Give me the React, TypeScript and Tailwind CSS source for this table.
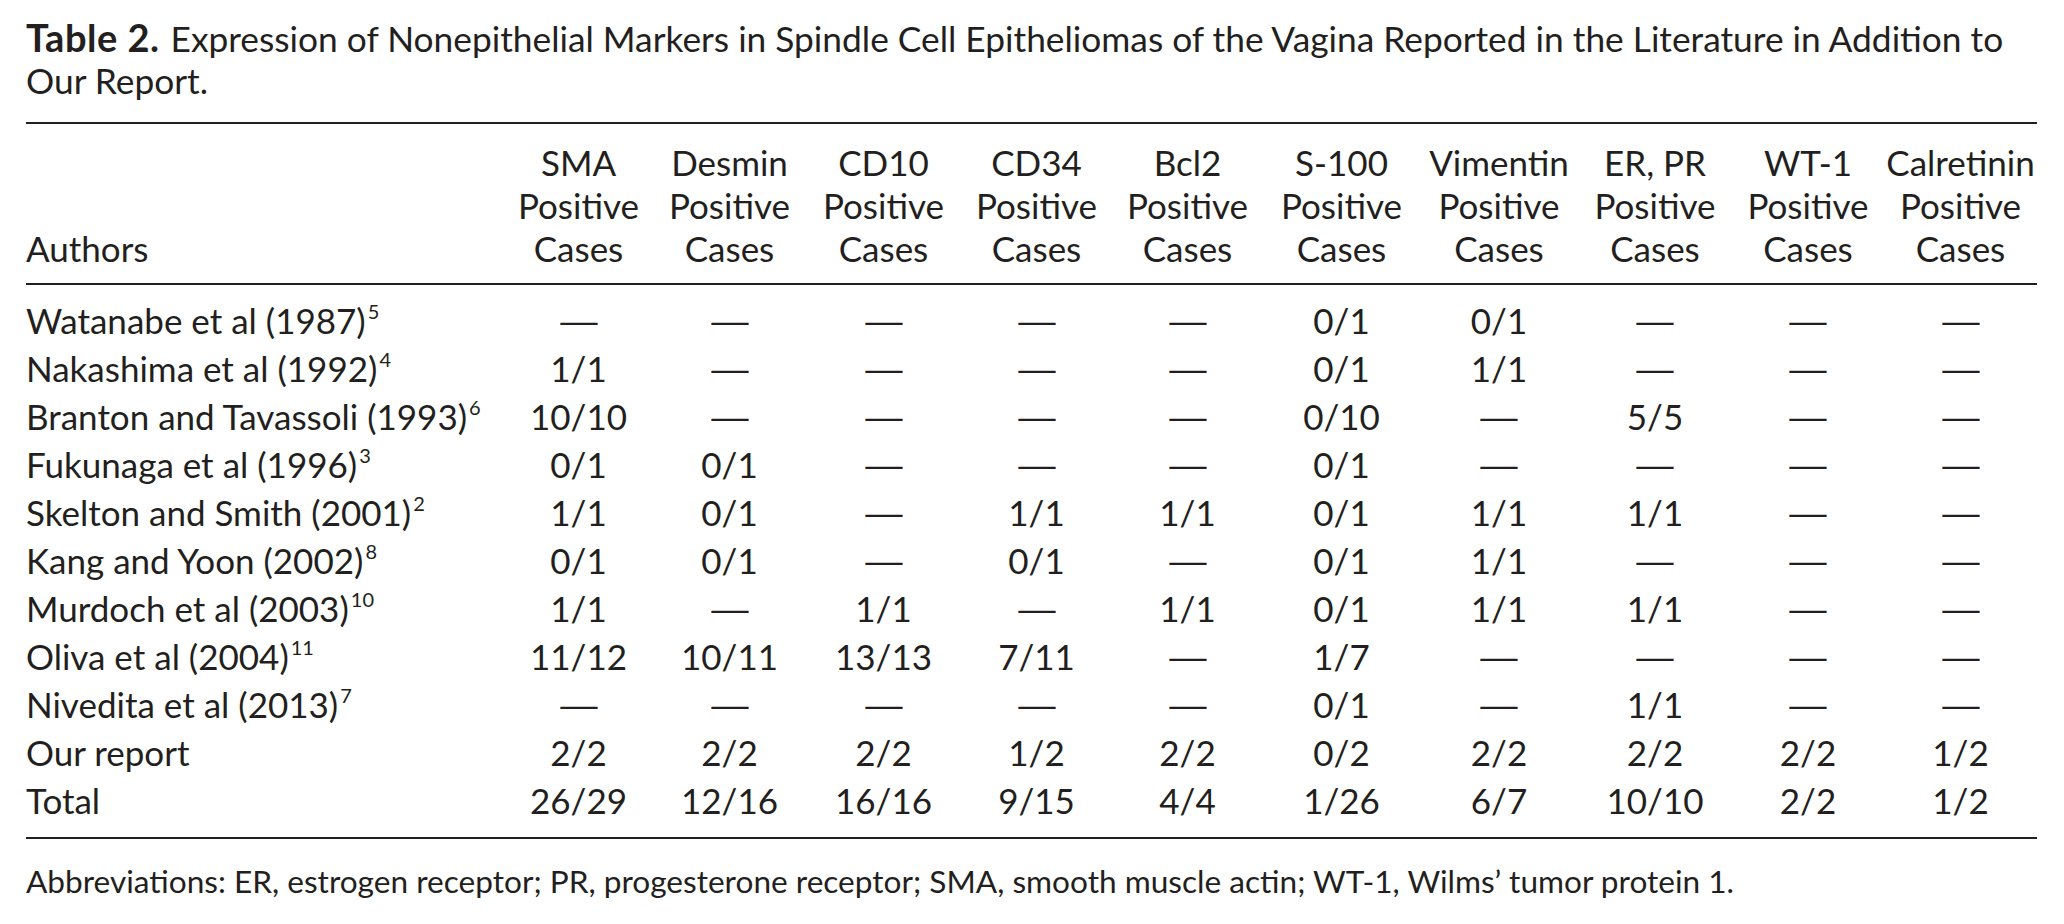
const cols = ["SMA", "Desmin", "CD10", "CD34", "Bcl2", "S-100", "Vimentin", "ER, PR", "WT-1", "Calretinin"];

const rows: { name: string; ref?: string; cells: string[] }[] = [
  { name: "Watanabe et al (1987)", ref: "5", cells: ["—", "—", "—", "—", "—", "0/1", "0/1", "—", "—", "—"] },
  { name: "Nakashima et al (1992)", ref: "4", cells: ["1/1", "—", "—", "—", "—", "0/1", "1/1", "—", "—", "—"] },
  { name: "Branton and Tavassoli (1993)", ref: "6", cells: ["10/10", "—", "—", "—", "—", "0/10", "—", "5/5", "—", "—"] },
  { name: "Fukunaga et al (1996)", ref: "3", cells: ["0/1", "0/1", "—", "—", "—", "0/1", "—", "—", "—", "—"] },
  { name: "Skelton and Smith (2001)", ref: "2", cells: ["1/1", "0/1", "—", "1/1", "1/1", "0/1", "1/1", "1/1", "—", "—"] },
  { name: "Kang and Yoon (2002)", ref: "8", cells: ["0/1", "0/1", "—", "0/1", "—", "0/1", "1/1", "—", "—", "—"] },
  { name: "Murdoch et al (2003)", ref: "10", cells: ["1/1", "—", "1/1", "—", "1/1", "0/1", "1/1", "1/1", "—", "—"] },
  { name: "Oliva et al (2004)", ref: "11", cells: ["11/12", "10/11", "13/13", "7/11", "—", "1/7", "—", "—", "—", "—"] },
  { name: "Nivedita et al (2013)", ref: "7", cells: ["—", "—", "—", "—", "—", "0/1", "—", "1/1", "—", "—"] },
  { name: "Our report", cells: ["2/2", "2/2", "2/2", "1/2", "2/2", "0/2", "2/2", "2/2", "2/2", "1/2"] },
  { name: "Total", cells: ["26/29", "12/16", "16/16", "9/15", "4/4", "1/26", "6/7", "10/10", "2/2", "1/2"] },
];

const grid = "grid grid-cols-[478px_149px_153px_155px_151px_151px_157px_158px_154px_152px_153px]";

function Cell({ v }: { v: string }) {
  if (v === "—") {
    return (
      <div className="text-center">
        <span className="inline-block scale-x-[1.6]">—</span>
      </div>
    );
  }
  return <div className="text-center">{v}</div>;
}

export default function App() {
  return (
    <div className="w-[2064px] h-[924px] bg-white pl-[26px] pr-[27px] pt-[16px] text-[#231f20] font-['Lato','Liberation_Sans',sans-serif]">
      {/* caption */}
      <div className="text-[35.3px] leading-[42px]">
        <div className="flex items-baseline whitespace-nowrap">
          <span className="font-bold text-[38px] tracking-[0.5px]">Table 2.</span>
          <span className="ml-[11px]">
            Expression of Nonepithelial Markers in Spindle Cell Epitheliomas of the Vagina Reported in the Literature in Addition to
          </span>
        </div>
        <div>Our Report.</div>
      </div>

      <div className="mt-[20px] h-[2px] bg-[#231f20]"></div>

      {/* header */}
      <div className={`${grid} items-end pt-[17px] pb-[13px] text-[35px] leading-[43px]`}>
        <div>Authors</div>
        {cols.map((c) => (
          <div key={c} className="flex flex-col items-center">
            <span className="whitespace-nowrap">{c}</span>
            <span>Positive</span>
            <span>Cases</span>
          </div>
        ))}
      </div>

      <div className="h-[2px] bg-[#231f20]"></div>

      {/* body */}
      <div className="pt-[11px] pb-[13px] text-[35px] leading-[48px]">
        {rows.map((r) => (
          <div key={r.name} className={grid}>
            <div className="whitespace-nowrap">
              {r.name}
              {r.ref && <sup className="text-[20px] -top-[15px] ml-[2px]">{r.ref}</sup>}
            </div>
            {r.cells.map((v, i) => (
              <Cell key={i} v={v} />
            ))}
          </div>
        ))}
      </div>

      <div className="h-[2px] bg-[#231f20]"></div>

      <p className="mt-[22px] text-[31.6px] leading-[40px]">
        Abbreviations: ER, estrogen receptor; PR, progesterone receptor; SMA, smooth muscle actin; WT-1, Wilms’ tumor protein 1.
      </p>
    </div>
  );
}
